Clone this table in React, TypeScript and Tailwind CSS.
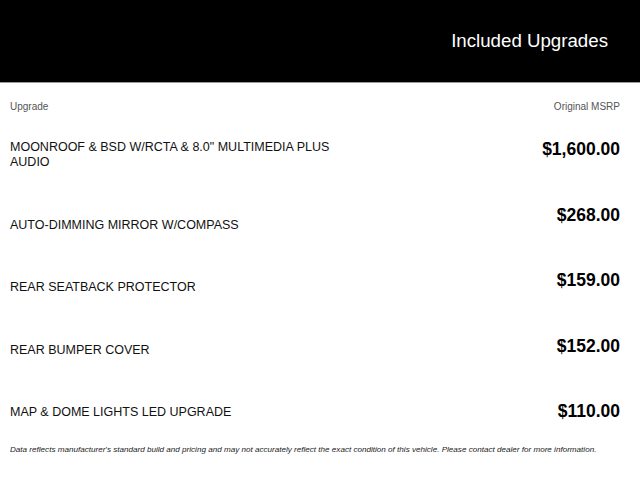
import React from "react";

const items = [
  "MOONROOF & BSD W/RCTA & 8.0\" MULTIMEDIA PLUS AUDIO",
  "AUTO-DIMMING MIRROR W/COMPASS",
  "REAR SEATBACK PROTECTOR",
  "REAR BUMPER COVER",
  "MAP & DOME LIGHTS LED UPGRADE",
];
const prices = ["$1,600.00", "$268.00", "$159.00", "$152.00", "$110.00"];

export default function App() {
  return (
    <div className="w-[640px] h-[480px] bg-white font-['Liberation_Sans',Arial,sans-serif] overflow-hidden">
      <div className="h-[83px] bg-black border-b border-[#9a9a9a] flex items-center justify-end pr-[32px]">
        <h1 className="text-white text-[18.7px] leading-[22px] font-normal">Included Upgrades</h1>
      </div>
      <div className="pl-[10px] pr-[20px]">
        <div className="mt-[17px] flex justify-between text-[10px] leading-[13px] text-[#555]">
          <span>Upgrade</span>
          <span>Original MSRP</span>
        </div>
        <div className="mt-[26px] flex justify-between">
          <div className="w-[350px] pt-[1px] flex flex-col gap-[47.5px] text-[12.5px] leading-[15px] text-[#111]">
            {items.map((t) => (
              <div key={t}>{t}</div>
            ))}
          </div>
          <div className="flex flex-col items-end gap-[45.5px] text-[17.5px] leading-[20px] font-bold text-black">
            {prices.map((p) => (
              <div key={p}>{p}</div>
            ))}
          </div>
        </div>
        <p className="mt-[24px] text-[8.1px] leading-[10px] italic text-[#222]">
          Data reflects manufacturer's standard build and pricing and may not accurately reflect the exact condition of this vehicle. Please contact dealer for more information.
        </p>
      </div>
    </div>
  );
}
